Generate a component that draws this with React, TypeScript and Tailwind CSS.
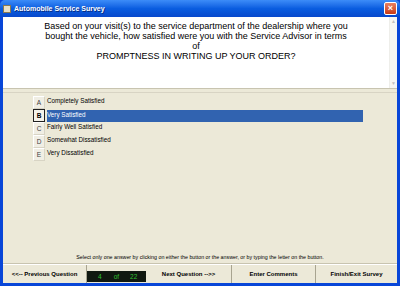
import React from "react";

const options = [
  { k: "A", t: "Completely Satisfied" },
  { k: "B", t: "Very Satisfied", sel: true },
  { k: "C", t: "Fairly Well Satisfied" },
  { k: "D", t: "Somewhat Dissatisfied" },
  { k: "E", t: "Very Dissatisfied" },
];

export default function App() {
  return (
    <div
      className="w-[400px] h-[286px] flex flex-col bg-[#0846d8] overflow-hidden"
      style={{ fontFamily: '"Liberation Sans", Arial, sans-serif' }}
    >
      {/* Title bar */}
      <div className="h-[17px] flex items-center px-[3px] bg-gradient-to-b from-[#3c8cf8] via-[#0a5de0] to-[#0848cc] rounded-t-[5px]">
        <div className="w-[8px] h-[8px] bg-[#e8e0c8] border border-[#8a7a50] mr-[3px]" />
        <span className="text-white font-bold text-[7px] leading-none" style={{ textShadow: "1px 1px 0 #0a2c80" }}>
          Automobile Service Survey
        </span>
        <div className="ml-auto w-[13px] h-[13px] rounded-[2px] border border-white bg-gradient-to-b from-[#e88060] to-[#c83810] flex items-center justify-center text-white text-[9px] font-bold leading-none">
          ×
        </div>
      </div>
      {/* Body */}
      <div className="flex-1 flex flex-col mx-[3px] mb-[3px] bg-[#ece9d8]">
        {/* Question */}
        <div className="h-[72px] flex bg-white border-b border-[#c8c4b0]">
          <div className="flex-1 pt-[4px] text-center text-[9px] leading-[10px] text-black">
            <div>Based on your visit(s) to the service department of the dealership where you</div>
            <div>bought the vehicle, how satisfied were you with the Service Advisor in terms</div>
            <div>of</div>
            <div>PROMPTNESS IN WRITING UP YOUR ORDER?</div>
          </div>
          <div className="w-[8px] bg-[#f6f6f2] border-l border-[#eeeeea] flex flex-col justify-between items-center text-[5px] text-[#c0c0c0] py-[1px]">
            <span>▲</span>
            <span>▼</span>
          </div>
        </div>
        <div className="h-[4px] border-b border-[#d8d4c4]" />
        {/* Options */}
        <div className="pl-[30px] pt-[3px] flex flex-col">
          {options.map((o) => (
            <div key={o.k} className="flex items-start h-[13px]">
              <div
                className={
                  "w-[12px] h-[13px] flex items-center justify-center text-[6.5px] text-[#404040] " +
                  (o.sel
                    ? "border border-[#202020] bg-[#f4f2ea] font-bold text-black"
                    : "border border-t-white border-l-white border-r-[#d8d4c4] border-b-[#d8d4c4] bg-[#f0eee4]")
                }
              >
                {o.k}
              </div>
              <div
                className={
                  "ml-[2px] text-[6.3px] leading-[9px] " +
                  (o.sel ? "w-[316px] h-[12px] bg-[#3163b0] text-white mt-[1px]" : "text-black")
                }
              >
                {o.t}
              </div>
            </div>
          ))}
        </div>
        <div className="flex-1" />
        {/* Instruction */}
        <div className="text-center text-[5.3px] text-black leading-[8px] pb-[2px] border-b border-[#c8c4b0]">
          Select only one answer by clicking on either the button or the answer, or by typing the letter on the button.
        </div>
        {/* Buttons */}
        <div className="h-[19px] flex text-[6px] font-bold text-black border-t border-white">
          <div className="w-[84px] flex items-center justify-center border-r border-[#a8a490]">&lt;&lt;-- Previous Question</div>
          <div className="w-[59px] flex items-end pb-[1px]">
            <div className="w-full h-[11px] bg-[#101810] flex items-center text-[#30c030] font-normal text-[6.5px]">
              <span className="ml-[11px]">4</span>
              <span className="ml-[12px]">of</span>
              <span className="ml-[11px]">22</span>
            </div>
          </div>
          <div className="w-[86px] flex items-center justify-center border-r border-[#a8a490]">Next Question --&gt;&gt;</div>
          <div className="w-[84px] flex items-center justify-center border-r border-[#a8a490]">Enter Comments</div>
          <div className="flex-1 flex items-center justify-center">Finish/Exit Survey</div>
        </div>
      </div>
    </div>
  );
}
